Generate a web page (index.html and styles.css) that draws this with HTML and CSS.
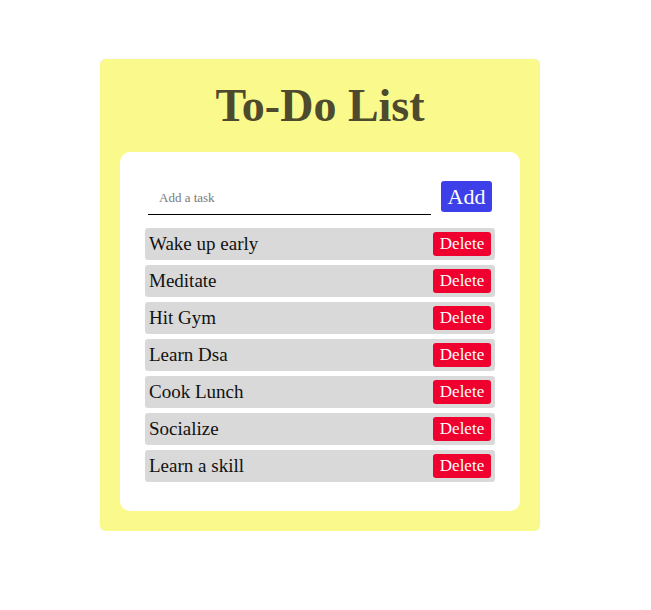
FILE: index.html
```html
<!DOCTYPE html>
<html>
<head>
<meta charset="utf-8">
<link rel="stylesheet" href="styles.css">
</head>
<body>
<div class="card">
  <h1 class="title">To-Do List</h1>
  <div class="panel">
    <div class="add-row">
      <input class="task-input" type="text" placeholder="Add a task">
      <button class="add-btn">Add</button>
    </div>
    <ul class="tasks">
      <li class="task"><span class="task-text">Wake up early</span><button class="del-btn">Delete</button></li>
      <li class="task"><span class="task-text">Meditate</span><button class="del-btn">Delete</button></li>
      <li class="task"><span class="task-text">Hit Gym</span><button class="del-btn">Delete</button></li>
      <li class="task"><span class="task-text">Learn Dsa</span><button class="del-btn">Delete</button></li>
      <li class="task"><span class="task-text">Cook Lunch</span><button class="del-btn">Delete</button></li>
      <li class="task"><span class="task-text">Socialize</span><button class="del-btn">Delete</button></li>
      <li class="task"><span class="task-text">Learn a skill</span><button class="del-btn">Delete</button></li>
    </ul>
  </div>
</div>
</body>
</html>
```
FILE: styles.css
```css
* { box-sizing: border-box; }
body {
  margin: 0;
  padding: 59px 0 0 100px;
  background: #ffffff;
  font-family: "Liberation Serif", serif;
}
.card {
  width: 440px;
  background: #fafa8c;
  border-radius: 6px;
  padding: 0 20px 20px;
  box-shadow: 0 0 2px rgba(0,0,0,0.08);
}
.title {
  margin: 0;
  height: 93px;
  padding-top: 22px;
  text-align: center;
  font-size: 46px;
  line-height: 50px;
  font-weight: bold;
  color: #4e4a2d;
}
.panel {
  background: #ffffff;
  border-radius: 10px;
  padding: 29px 25px 29px 25px;
}
.add-row {
  display: flex;
  align-items: flex-start;
  margin-bottom: 13px;
}
.task-input {
  width: 283px;
  height: 34px;
  margin-left: 3px;
  border: none;
  border-bottom: 1.5px solid #000;
  outline: none;
  padding: 0 11px;
  font-family: "Liberation Serif", serif;
  font-size: 13px;
  background: transparent;
}
.task-input::placeholder { color: #7a7a7a; }
.add-btn {
  margin-left: 10px;
  width: 51px;
  height: 31px;
  border: none;
  border-radius: 3px;
  background: #3d40e8;
  color: #fff;
  font-family: "Liberation Serif", serif;
  font-size: 22px;
  padding: 0;
}
.tasks {
  list-style: none;
  margin: 0;
  padding: 0;
  display: flex;
  flex-direction: column;
  gap: 5px;
}
.task {
  height: 32px;
  background: #d9d9d9;
  border-radius: 3px;
  display: flex;
  align-items: center;
  justify-content: space-between;
  padding: 0 4px;
}
.task-text {
  font-size: 19px;
  color: #111;
}
.del-btn {
  width: 58px;
  height: 24px;
  border: none;
  border-radius: 3px;
  background: #f0002e;
  color: #fff;
  font-family: "Liberation Serif", serif;
  font-size: 17px;
  padding: 0;
}
```
